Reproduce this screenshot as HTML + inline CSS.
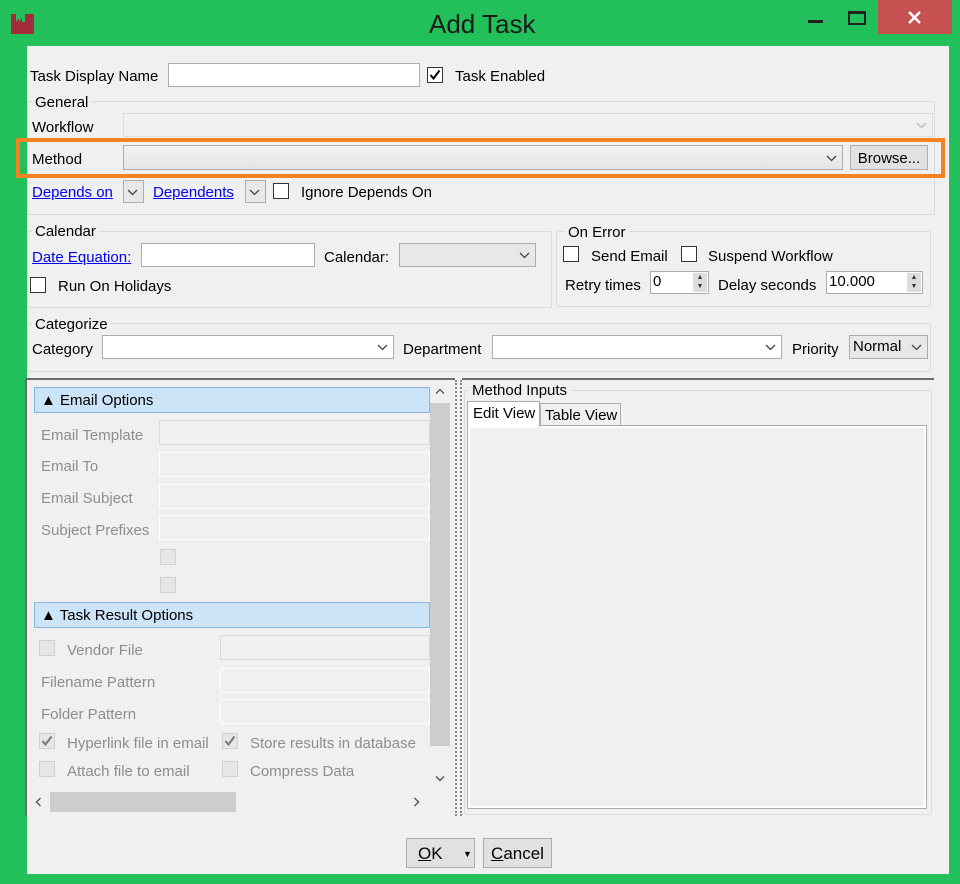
<!DOCTYPE html>
<html><head><meta charset="utf-8"><style>
*{box-sizing:border-box;margin:0;padding:0}
body{width:960px;height:884px;background:#22c05a;font-family:"Liberation Sans",sans-serif;font-size:15px;color:#000;position:relative;overflow:hidden}
.a{position:absolute;white-space:nowrap}
.t{transform:translateY(2px)}
.client{position:absolute;left:27px;top:46px;width:922px;height:828px;background:#f0f0f0}
.in{position:absolute;background:#fff;border:1px solid #abadb3}
.dis{position:absolute;background:#f0f0f0;border:1px solid #dcdcdc}
.cb{position:absolute;width:16px;height:16px;background:#fff;border:1px solid #333}
.cbd{position:absolute;width:16px;height:16px;background:#e6e6e6;border:1px solid #d0d0d0}
.grp{position:absolute;border:1px solid #dcdcdc;border-radius:2px}
.gl{position:absolute;background:#f0f0f0;padding:0 3px;transform:translateY(1px)}
.lnk{color:#0000ee;text-decoration:underline}
.combo{position:absolute;background:#e8e8e8;border:1px solid #acacac}
.chev{position:absolute;right:5px;top:50%;margin-top:-3px}
.btn{position:absolute;background:#e1e1e1;border:1px solid #adadad;text-align:center}
.g{color:#8d8d8d}
.hdr{position:absolute;left:34px;width:396px;height:26px;background:#cce4f7;border:1px solid #8ab8e2;padding:4px 0 0 6px}
.box{position:absolute;left:159px;width:271px;height:25px;background:#f0f0f0;border:1px solid #dadada}
.boxw{border-color:#fff}
</style></head><body>
<svg class="a" style="left:11px;top:14px" width="23" height="20" viewBox="0 0 23 20"><path d="M0 0h5v8l3-4v4l3-4v4h3V0h9v20H0z" fill="#a52a3a"/></svg>
<div class="a" style="left:429px;top:9px;font-size:26px;color:#1a1a1a">Add Task</div>
<div class="a" style="left:808px;top:20px;width:15px;height:3px;background:#222"></div>
<div class="a" style="left:848px;top:11px;width:18px;height:14px;border:2px solid #222;border-top-width:3px"></div>
<div class="a" style="left:878px;top:0;width:74px;height:34px;background:#c75050"><svg class="a" style="left:29px;top:10px" width="15" height="15"><path d="M2 2l11 11M13 2L2 13" stroke="#fff" stroke-width="2.5"/></svg></div>
<div class="client"></div>

<div class="a t" style="left:30px;top:66px">Task Display Name</div>
<div class="in" style="left:168px;top:63px;width:252px;height:24px"></div>
<div class="cb" style="left:427px;top:67px"><svg class="a" style="left:1px;top:1px" width="12" height="12"><path d="M1.5 6l3 3.5 6-8" stroke="#000" stroke-width="2" fill="none"/></svg></div>
<div class="a t" style="left:455px;top:66px">Task Enabled</div>

<div class="grp" style="left:27px;top:101px;width:908px;height:114px"></div>
<div class="gl" style="left:32px;top:93px">General</div>
<div class="a t" style="left:32px;top:117px">Workflow</div>
<div class="dis" style="left:123px;top:113px;width:810px;height:24px"><svg class="chev" width="11" height="7"><path d="M1 1l4.5 4.5L10 1" stroke="#bbb" stroke-width="1.3" fill="none"/></svg></div>
<div class="a" style="left:16px;top:138px;width:929px;height:40px;border:4px solid #f58220"></div>
<div class="a t" style="left:32px;top:149px">Method</div>
<div class="combo" style="left:123px;top:145px;width:720px;height:25px;background:linear-gradient(#f2f2f2,#e5e5e5)"><svg class="chev" width="11" height="7"><path d="M1 1l4.5 4.5L10 1" stroke="#444" stroke-width="1.3" fill="none"/></svg></div>
<div class="btn" style="left:850px;top:145px;width:78px;height:25px;line-height:25px">Browse...</div>
<div class="a lnk t" style="left:32px;top:182px">Depends on</div>
<div class="combo" style="left:123px;top:180px;width:21px;height:23px"><svg class="chev" width="11" height="7"><path d="M1 1l4.5 4.5L10 1" stroke="#444" stroke-width="1.3" fill="none"/></svg></div>
<div class="a lnk t" style="left:153px;top:182px">Dependents</div>
<div class="combo" style="left:245px;top:180px;width:21px;height:23px"><svg class="chev" width="11" height="7"><path d="M1 1l4.5 4.5L10 1" stroke="#444" stroke-width="1.3" fill="none"/></svg></div>
<div class="cb" style="left:273px;top:183px"></div>
<div class="a t" style="left:301px;top:182px">Ignore Depends On</div>

<div class="grp" style="left:27px;top:231px;width:525px;height:77px"></div>
<div class="gl" style="left:32px;top:222px">Calendar</div>
<div class="a lnk t" style="left:32px;top:247px">Date Equation:</div>
<div class="in" style="left:141px;top:243px;width:174px;height:24px"></div>
<div class="a t" style="left:324px;top:247px">Calendar:</div>
<div class="combo" style="left:399px;top:243px;width:137px;height:24px"><svg class="chev" width="11" height="7"><path d="M1 1l4.5 4.5L10 1" stroke="#444" stroke-width="1.3" fill="none"/></svg></div>
<div class="cb" style="left:30px;top:277px"></div>
<div class="a t" style="left:58px;top:276px">Run On Holidays</div>

<div class="grp" style="left:556px;top:231px;width:375px;height:76px"></div>
<div class="gl" style="left:565px;top:223px">On Error</div>
<div class="cb" style="left:563px;top:246px"></div>
<div class="a t" style="left:591px;top:246px">Send Email</div>
<div class="cb" style="left:681px;top:246px"></div>
<div class="a t" style="left:708px;top:246px">Suspend Workflow</div>
<div class="a t" style="left:565px;top:275px">Retry times</div>
<div class="in" style="left:650px;top:271px;width:59px;height:23px;padding:1px 2px">0<div class="a" style="right:1px;top:1px;width:14px;height:19px;font-size:7px;line-height:9px;color:#333;text-align:center;background:#ddd">▲<br>▼</div></div>
<div class="a t" style="left:718px;top:275px">Delay seconds</div>
<div class="in" style="left:826px;top:271px;width:97px;height:23px;padding:1px 2px">10.000<div class="a" style="right:1px;top:1px;width:14px;height:19px;font-size:7px;line-height:9px;color:#333;text-align:center;background:#ddd">▲<br>▼</div></div>

<div class="grp" style="left:27px;top:323px;width:904px;height:49px"></div>
<div class="gl" style="left:32px;top:315px">Categorize</div>
<div class="a t" style="left:32px;top:339px">Category</div>
<div class="in" style="left:102px;top:335px;width:292px;height:24px"><svg class="chev" width="11" height="7"><path d="M1 1l4.5 4.5L10 1" stroke="#444" stroke-width="1.3" fill="none"/></svg></div>
<div class="a t" style="left:403px;top:339px">Department</div>
<div class="in" style="left:492px;top:335px;width:290px;height:24px"><svg class="chev" width="11" height="7"><path d="M1 1l4.5 4.5L10 1" stroke="#444" stroke-width="1.3" fill="none"/></svg></div>
<div class="a t" style="left:792px;top:339px">Priority</div>
<div class="combo" style="left:849px;top:335px;width:79px;height:24px;padding:2px 3px">Normal<svg class="chev" width="11" height="7"><path d="M1 1l4.5 4.5L10 1" stroke="#444" stroke-width="1.3" fill="none"/></svg></div>

<div class="a" style="left:25px;top:378px;width:430px;height:438px;border-top:2px solid #6d6d6d;border-left:2px solid #6d6d6d"></div>
<div class="hdr" style="top:387px">▲ Email Options</div>
<div class="a g t" style="left:41px;top:425px">Email Template</div><div class="box" style="top:420px"></div>
<div class="a g t" style="left:41px;top:456px">Email To</div><div class="box boxw" style="top:452px"></div>
<div class="a g t" style="left:41px;top:488px">Email Subject</div><div class="box boxw" style="top:484px"></div>
<div class="a g t" style="left:41px;top:520px">Subject Prefixes</div><div class="box boxw" style="top:515px"></div>
<div class="cbd" style="left:160px;top:549px"></div>
<div class="cbd" style="left:160px;top:577px"></div>
<div class="hdr" style="top:602px">▲ Task Result Options</div>
<div class="cbd" style="left:39px;top:640px"></div><div class="a g t" style="left:67px;top:640px">Vendor File</div>
<div class="box" style="left:220px;width:210px;top:635px"></div>
<div class="a g t" style="left:41px;top:672px">Filename Pattern</div><div class="box boxw" style="left:220px;width:210px;top:668px"></div>
<div class="a g t" style="left:41px;top:704px">Folder Pattern</div><div class="box boxw" style="left:220px;width:210px;top:699px"></div>
<div class="cbd" style="left:39px;top:733px"><svg class="a" style="left:1px;top:1px" width="12" height="12"><path d="M1.5 6l3 3.5 6-8" stroke="#777" stroke-width="2" fill="none"/></svg></div><div class="a g t" style="left:67px;top:733px">Hyperlink file in email</div>
<div class="cbd" style="left:222px;top:733px"><svg class="a" style="left:1px;top:1px" width="12" height="12"><path d="M1.5 6l3 3.5 6-8" stroke="#777" stroke-width="2" fill="none"/></svg></div><div class="a g t" style="left:250px;top:733px">Store results in database</div>
<div class="cbd" style="left:39px;top:761px"></div><div class="a g t" style="left:67px;top:761px">Attach file to email</div>
<div class="cbd" style="left:222px;top:761px"></div><div class="a g t" style="left:250px;top:761px">Compress Data</div>
<div class="a" style="left:430px;top:380px;width:20px;height:412px;background:#f0f0f0"></div>
<div class="a" style="left:430px;top:403px;width:20px;height:343px;background:#cdcdcd"></div>
<svg class="a" style="left:435px;top:388px" width="10" height="7"><path d="M1 5.5l4-4 4 4" stroke="#555" stroke-width="1.4" fill="none"/></svg>
<svg class="a" style="left:435px;top:775px" width="10" height="7"><path d="M1 1.5l4 4 4-4" stroke="#555" stroke-width="1.4" fill="none"/></svg>
<div class="a" style="left:27px;top:792px;width:403px;height:21px;background:#f0f0f0"></div>
<div class="a" style="left:50px;top:792px;width:186px;height:20px;background:#cdcdcd"></div>
<svg class="a" style="left:35px;top:797px" width="7" height="10"><path d="M5.5 1l-4 4 4 4" stroke="#555" stroke-width="1.4" fill="none"/></svg>
<svg class="a" style="left:413px;top:797px" width="7" height="10"><path d="M1.5 1l4 4-4 4" stroke="#555" stroke-width="1.4" fill="none"/></svg>

<div class="a" style="left:455px;top:380px;width:7px;height:436px;border-left:2px dotted #888;border-right:2px dotted #888"></div>
<div class="a" style="left:462px;top:378px;width:472px;height:2px;background:#6d6d6d"></div>
<div class="grp" style="left:464px;top:390px;width:468px;height:425px"></div>
<div class="gl" style="left:469px;top:381px">Method Inputs</div>
<div class="a" style="left:467px;top:425px;width:460px;height:384px;border:1px solid #adadad;background:#f0f0f0;box-shadow:inset 0 0 0 2px #fff"></div>
<div class="a" style="left:540px;top:403px;width:81px;height:23px;border:1px solid #adadad;background:#f0f0f0;padding:3px 4px">Table View</div>
<div class="a" style="left:467px;top:401px;width:73px;height:26px;border:1px solid #adadad;border-bottom:none;background:#fff;padding:3px 5px">Edit View</div>

<div class="btn" style="left:406px;top:838px;width:69px;height:30px;font-size:17px;line-height:30px;text-align:left;padding-left:11px"><u>O</u>K<span class="a" style="left:56px;top:0;font-size:9px">▼</span></div>
<div class="btn" style="left:483px;top:838px;width:69px;height:30px;font-size:17px;line-height:30px"><u>C</u>ancel</div>
</body></html>
